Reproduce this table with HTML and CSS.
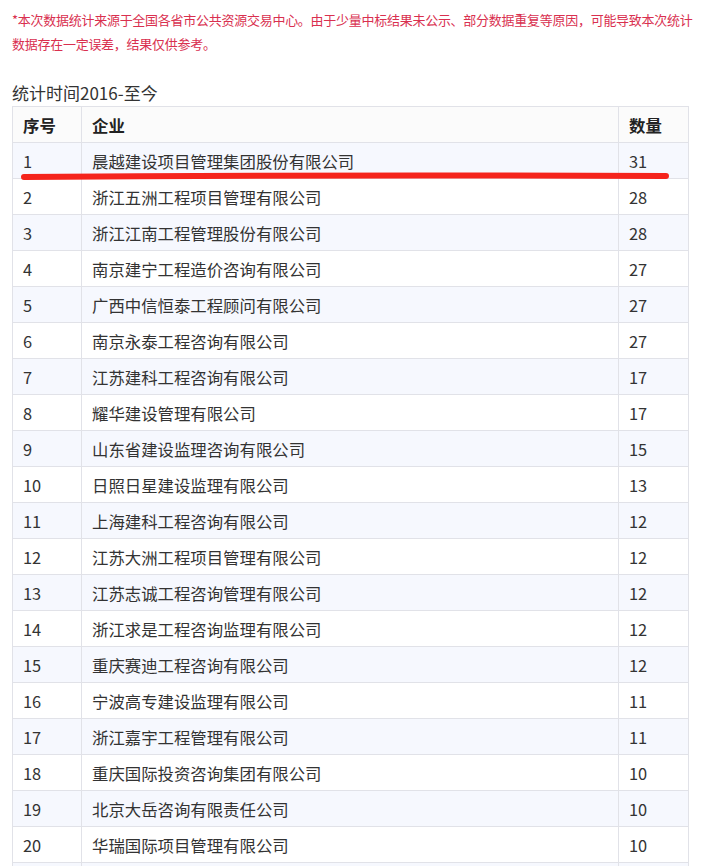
FILE: index.html
```html
<!DOCTYPE html>
<html lang="zh">
<head>
<meta charset="utf-8">
<title>统计</title>
<link rel="stylesheet" href="styles.css">
</head>
<body>
<div class="page">
  <p class="note">*本次数据统计来源于全国各省市公共资源交易中心。由于少量中标结果未公示、部分数据重复等原因，可能导致本次统计数据存在一定误差，结果仅供参考。</p>
  <h2 class="period">统计时间2016-至今</h2>
  <div class="table-wrap">
    <table class="rank">
      <thead>
        <tr><th class="c-no">序号</th><th class="c-name">企业</th><th class="c-num">数量</th></tr>
      </thead>
      <tbody>
        <tr><td>1</td><td>晨越建设项目管理集团股份有限公司</td><td>31</td></tr>
        <tr><td>2</td><td>浙江五洲工程项目管理有限公司</td><td>28</td></tr>
        <tr><td>3</td><td>浙江江南工程管理股份有限公司</td><td>28</td></tr>
        <tr><td>4</td><td>南京建宁工程造价咨询有限公司</td><td>27</td></tr>
        <tr><td>5</td><td>广西中信恒泰工程顾问有限公司</td><td>27</td></tr>
        <tr><td>6</td><td>南京永泰工程咨询有限公司</td><td>27</td></tr>
        <tr><td>7</td><td>江苏建科工程咨询有限公司</td><td>17</td></tr>
        <tr><td>8</td><td>耀华建设管理有限公司</td><td>17</td></tr>
        <tr><td>9</td><td>山东省建设监理咨询有限公司</td><td>15</td></tr>
        <tr><td>10</td><td>日照日星建设监理有限公司</td><td>13</td></tr>
        <tr><td>11</td><td>上海建科工程咨询有限公司</td><td>12</td></tr>
        <tr><td>12</td><td>江苏大洲工程项目管理有限公司</td><td>12</td></tr>
        <tr><td>13</td><td>江苏志诚工程咨询管理有限公司</td><td>12</td></tr>
        <tr><td>14</td><td>浙江求是工程咨询监理有限公司</td><td>12</td></tr>
        <tr><td>15</td><td>重庆赛迪工程咨询有限公司</td><td>12</td></tr>
        <tr><td>16</td><td>宁波高专建设监理有限公司</td><td>11</td></tr>
        <tr><td>17</td><td>浙江嘉宇工程管理有限公司</td><td>11</td></tr>
        <tr><td>18</td><td>重庆国际投资咨询集团有限公司</td><td>10</td></tr>
        <tr><td>19</td><td>北京大岳咨询有限责任公司</td><td>10</td></tr>
        <tr><td>20</td><td>华瑞国际项目管理有限公司</td><td>10</td></tr>
        <tr><td>&nbsp;</td><td>&nbsp;</td><td>&nbsp;</td></tr>
      </tbody>
    </table>
    <svg class="mark" width="660" height="12" viewBox="0 0 660 12" aria-hidden="true">
      <path d="M4 7 Q 320 4.5 646 6" fill="none" stroke="#f5241c" stroke-width="6" stroke-linecap="round"/>
    </svg>
  </div>
</div>
</body>
</html>
```
FILE: styles.css
```css
* { box-sizing: border-box; }
html, body { margin: 0; padding: 0; background: #fff; }
body {
  font-family: "Noto Sans CJK SC", "Noto Sans", sans-serif;
  color: #333;
}
.page {
  padding: 8px 13px 0 12px;
}
.note {
  margin: 0 -13px 0 0;
  font-size: 13px;
  letter-spacing: -0.27px;
  line-height: 24px;
  color: #d9304f;
}
.period {
  margin: 25px 0 1px 0;
  font-size: 17px;
  line-height: 24px;
  font-weight: normal;
  color: #333;
}
.table-wrap {
  position: relative;
}
.rank {
  width: 677px;
  border-collapse: collapse;
  table-layout: fixed;
  font-size: 16.4px;
}
.rank th, .rank td {
  border: 1px solid #e1e2e8;
  height: 36px;
  padding: 0 10px;
  text-align: left;
  line-height: 20px;
  white-space: nowrap;
}
.rank th {
  font-weight: bold;
  background: #fbfbfb;
  color: #222;
}
.c-no { width: 69px; }
.c-num { width: 70px; }
.rank tbody tr:nth-child(odd) td { background: #f6f8fe; }
.rank tbody tr:nth-child(even) td { background: #ffffff; }
.mark {
  position: absolute;
  left: 8px;
  top: 64px;
}
```
